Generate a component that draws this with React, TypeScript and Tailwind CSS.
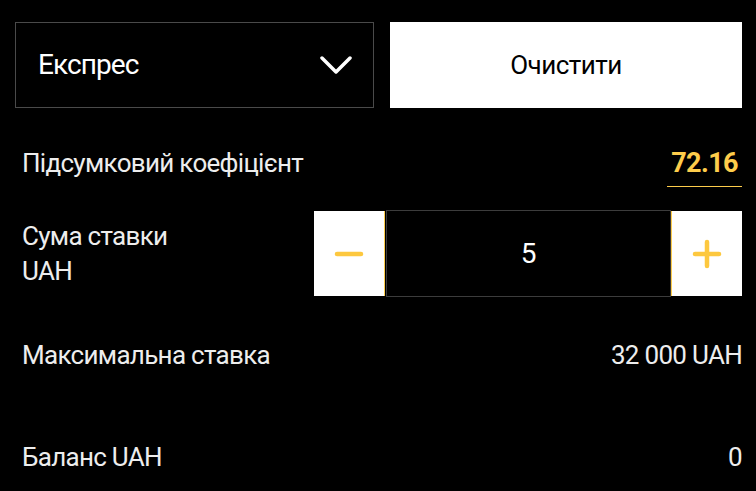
import React from "react";

const font = { fontFamily: "Roboto, 'Noto Sans', sans-serif" };

export default function App() {
    const [stake, setStake] = React.useState(5);

    return (
        <div className="w-[756px] h-[491px] bg-black text-[#ededed] overflow-hidden" style={font}>
            <div className="pl-[15px] pr-[14px] pt-[22px]">
                {/* тип ставки + очистити */}
                <div className="flex gap-4 h-[86px]">
                    <button className="w-[359px] h-full border border-[#4a4a4a] flex items-center justify-between pl-[22px] pr-[21px]">
                        <span className="text-[28px] text-white tracking-[-0.9px]">Експрес</span>
                        <svg width="32" height="19" viewBox="0 0 32 19" fill="none">
                            <polyline points="2,2 16,16 30,2" stroke="white" strokeWidth="3.5" strokeLinecap="round" strokeLinejoin="round" />
                        </svg>
                    </button>
                    <button className="flex-1 h-full bg-white flex items-center justify-center">
                        <span className="text-[26px] text-black tracking-[-0.5px]">Очистити</span>
                    </button>
                </div>

                {/* коефіцієнт */}
                <div className="flex items-start justify-between pl-[7px] mt-[40px]">
                    <span className="text-[26px] leading-[30px] tracking-[-0.7px]">Підсумковий коефіцієнт</span>
                    <span className="text-[27px] leading-[30px] font-bold text-[#fdcc4b] border-b border-[#fdcc4b] px-[4px] pb-[8px] tracking-[-0.6px]">72.16</span>
                </div>

                {/* сума ставки */}
                <div className="flex items-center justify-between mt-[23px]">
                    <div className="pl-[7px] text-[26px] leading-[35px] tracking-[-0.7px]">
                        <div>Сума ставки</div>
                        <div>UAH</div>
                    </div>
                    <div className="flex items-center h-[87px]">
                        <button
                            onClick={() => setStake((s) => Math.max(0, s - 1))}
                            className="w-[71px] h-[85px] bg-white border-r-[1.5px] border-[#fdcc4b] flex items-center justify-center"
                        >
                            <svg width="30" height="6" viewBox="0 0 30 6">
                                <line x1="3" y1="3" x2="27" y2="3" stroke="#fdc83f" strokeWidth="4.5" strokeLinecap="round" />
                            </svg>
                        </button>
                        <div className="w-[285px] h-[87px] border border-[#3c3c3c] flex items-center justify-center ml-px">
                            <span className="text-[28px] text-white">{stake}</span>
                        </div>
                        <button
                            onClick={() => setStake((s) => s + 1)}
                            className="w-[71px] h-[85px] bg-white border-l-[1.5px] border-[#fdcc4b] flex items-center justify-center"
                        >
                            <svg width="30" height="30" viewBox="0 0 30 30">
                                <line x1="3" y1="15" x2="27" y2="15" stroke="#fdc83f" strokeWidth="4.5" strokeLinecap="round" />
                                <line x1="15" y1="3" x2="15" y2="27" stroke="#fdc83f" strokeWidth="4.5" strokeLinecap="round" />
                            </svg>
                        </button>
                    </div>
                </div>

                {/* максимальна ставка */}
                <div className="flex items-center justify-between pl-[7px] mt-[43px] text-[26px] leading-[30px] tracking-[-0.7px]">
                    <span>Максимальна ставка</span>
                    <span>32 000 UAH</span>
                </div>

                {/* баланс */}
                <div className="flex items-center justify-between pl-[7px] mt-[72px] text-[26px] leading-[30px] tracking-[-0.7px]">
                    <span>Баланс UAH</span>
                    <span>0</span>
                </div>
            </div>
        </div>
    );
}
